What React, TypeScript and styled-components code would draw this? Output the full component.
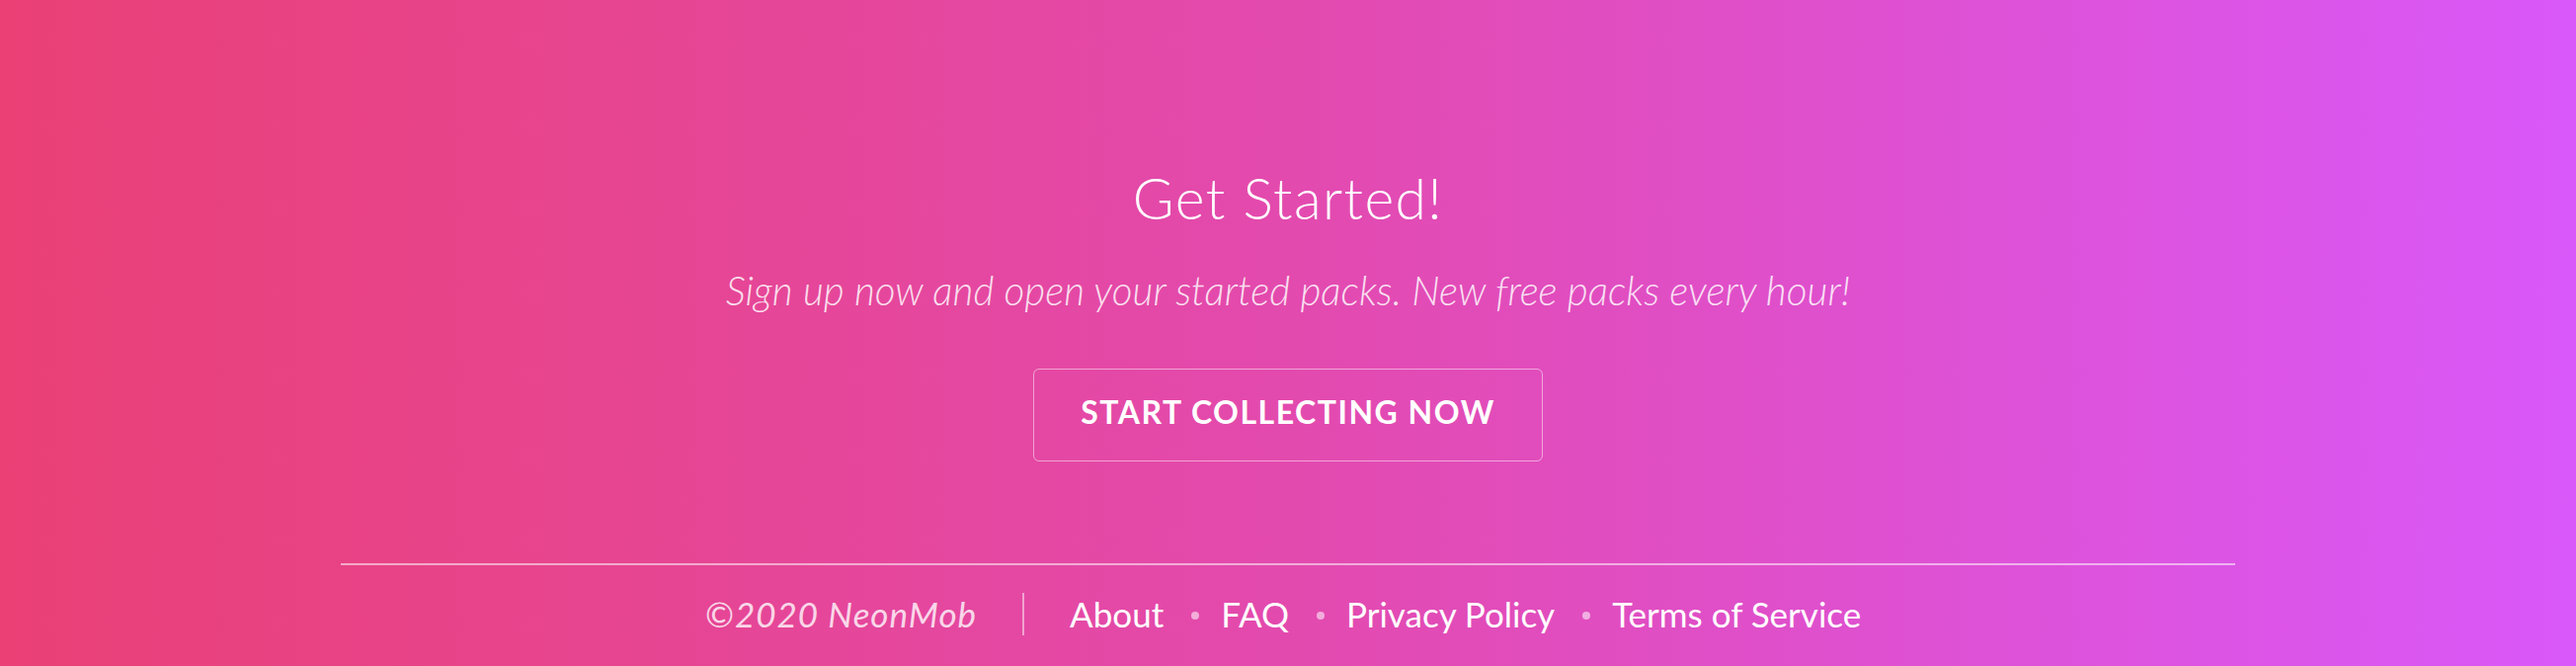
import React from "react";
import styled, { createGlobalStyle } from "styled-components";

const GlobalStyle = createGlobalStyle`
  html, body { margin: 0; padding: 0; }
  body { font-family: Lato, "Open Sans", sans-serif; }
`;

const Section = styled.section`
  box-sizing: border-box;
  width: 100%;
  height: 674px;
  background: linear-gradient(90deg, #ea4076 0%, #e34aae 50%, #d958f9 100%);
  display: flex;
  flex-direction: column;
  align-items: center;
  padding-top: 172px;
  color: #fff;
  overflow: hidden;
`;

const Heading = styled.h2`
  margin: 0;
  font-family: Lato, sans-serif;
  font-weight: 300;
  font-size: 57px;
  line-height: 1;
  letter-spacing: 1.4px;
`;

const Subtitle = styled.p`
  margin: 45px 0 0;
  font-family: Lato, sans-serif;
  font-style: italic;
  font-weight: 300;
  font-size: 40.5px;
  line-height: 1;
  color: rgba(255, 255, 255, 0.84);
`;

const CtaButton = styled.a`
  box-sizing: border-box;
  margin-top: 58px;
  width: 516px;
  height: 94px;
  padding-bottom: 5px;
  display: flex;
  align-items: center;
  justify-content: center;
  border: 1.5px solid rgba(255, 255, 255, 0.5);
  border-radius: 6px;
  font-family: Lato, sans-serif;
  font-weight: 700;
  font-size: 32px;
  line-height: 1;
  letter-spacing: 1.5px;
  text-transform: uppercase;
  color: #fff;
  text-decoration: none;
`;

const Rule = styled.hr`
  margin: 103px 0 0;
  width: 1918px;
  height: 2px;
  border: 0;
  background: rgba(255, 255, 255, 0.55);
`;

const Footer = styled.footer`
  margin: 28px 10px 0 0;
  display: flex;
  align-items: center;
  font-family: Lato, sans-serif;
  font-size: 35px;
  line-height: 1;
`;

const Copyright = styled.span`
  font-style: italic;
  letter-spacing: 1px;
  color: rgba(255, 255, 255, 0.8);
`;

const Divider = styled.span`
  width: 2px;
  height: 43px;
  margin: 0 46px;
  background: rgba(255, 255, 255, 0.5);
`;

const Links = styled.nav`
  display: flex;
  align-items: center;
`;

const LinkItem = styled.a`
  color: #fff;
  text-decoration: none;
`;

const Dot = styled.span`
  width: 8px;
  height: 8px;
  border-radius: 50%;
  margin: 4px 22px 0 28px;
  background: rgba(255, 255, 255, 0.55);
`;

const links = ["About", "FAQ", "Privacy Policy", "Terms of Service"];

export default function App() {
  return (
    <>
      <GlobalStyle />
      <Section>
        <Heading>Get Started!</Heading>
        <Subtitle>
          Sign up now and open your started packs. New free packs every hour!
        </Subtitle>
        <CtaButton href="#">Start Collecting Now</CtaButton>
        <Rule />
        <Footer>
          <Copyright>©2020 NeonMob</Copyright>
          <Divider />
          <Links>
            {links.map((l, i) => (
              <React.Fragment key={l}>
                {i > 0 && <Dot />}
                <LinkItem href="#">{l}</LinkItem>
              </React.Fragment>
            ))}
          </Links>
        </Footer>
      </Section>
    </>
  );
}
